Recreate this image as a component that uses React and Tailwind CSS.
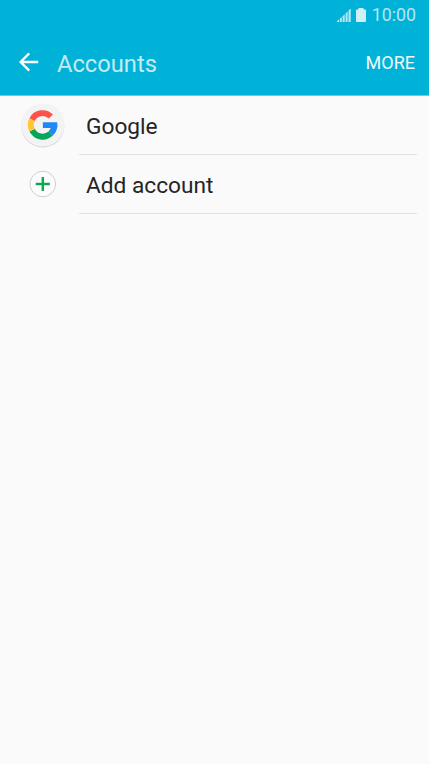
function SignalIcon() {
  return (
    <svg className="h-[14px] w-[14px]" viewBox="0 0 14 14" fill="#b9e8f2">
      <path d="M0 14v-1l2-1.5V14z" />
      <path d="M2.8 14v-3.2l2-1.7V14z" />
      <path d="M5.7 14V8.2l2-1.9V14z" />
      <path d="M8.6 14V5.4l2-2V14z" />
      <path d="M11.5 14V2.5L13.7.4V14z" />
    </svg>
  )
}

function BatteryIcon() {
  return (
    <svg className="h-[14px] w-[10px]" viewBox="0 0 10 14" fill="#d0eff6">
      <path d="M2.5 0h5v1.5H9.2q.8 0 .8.8V13.2q0 .8-.8.8H.8Q0 14 0 13.2V2.3q0-.8.8-.8h1.7z" />
    </svg>
  )
}

function BackIcon() {
  return (
    <svg className="h-5 w-5" viewBox="0 0 20 20" fill="none" stroke="#fff" strokeWidth="2.3">
      <path d="M19.2 10H2M10.2 1.4L1.6 10l8.6 8.6" />
    </svg>
  )
}

function GoogleIcon() {
  return (
    <svg className="h-[46px] w-[46px]" viewBox="0 0 46 46" fill="none" strokeWidth="5.9">
      <circle cx="22.8" cy="24" r="21.5" fill="#d2d2d2" />
      <circle cx="22.8" cy="23" r="21.6" fill="#f3f3f3" />
      <path stroke="#1e88f7" d="M30.8 31.4A11.8 11.8 0 0 0 34.4 22.9" />
      <path fill="#1e88f7" d="M22.9 20.2h14.3q.4 3.1-.2 5.8H22.9z" />
      <path stroke="#05a55b" d="M12.1 28.2A11.8 11.8 0 0 0 30.8 31.4" />
      <path stroke="#ffc62e" d="M12.1 17.6A11.8 11.8 0 0 0 12.1 28.2" />
      <path stroke="#fc5449" d="M30.9 14.5A11.8 11.8 0 0 0 12.1 17.6" />
    </svg>
  )
}

function AddIcon() {
  return (
    <svg className="h-7 w-7" viewBox="0 0 28 28" fill="none">
      <circle cx="13.8" cy="14" r="12.8" fill="#fcfcfc" stroke="#cfcfcf" />
      <path d="M13.8 7v14M6.8 14h14" stroke="#0aa84f" strokeWidth="2.4" />
    </svg>
  )
}

function AccountRow({ icon, label }) {
  return (
    <li className="flex h-[59px]">
      <div className="flex w-[79px] items-center justify-center pb-[2px] pl-[7px]">{icon}</div>
      <div className="mr-3 flex flex-1 items-center border-b border-[#e3e3e3] pl-[7px] pt-[3px]">
        <span className="text-[22.7px] leading-7 text-[#252525]">{label}</span>
      </div>
    </li>
  )
}

function App() {
  return (
    <div className="min-h-screen bg-[#fafafa] font-['Roboto',sans-serif]">
      <header className="h-24 border-b border-[#74c8dc] bg-[#00b2d8]">
        <div className="flex h-[30px] items-center justify-end pr-[13px]">
          <div className="flex gap-[5px] pb-px pr-[6px]">
            <SignalIcon />
            <BatteryIcon />
          </div>
          <span className="text-[17.8px] leading-[30px] text-[#b5e6f1]">10:00</span>
        </div>
        <div className="flex h-[65px] items-center pl-[19px] pr-[14px]">
          <button type="button" aria-label="Back" className="pb-px">
            <BackIcon />
          </button>
          <h1 className="ml-[18px] flex-1 pt-[2px] text-[23.7px] leading-7 text-[#c2ebf4]">Accounts</h1>
          <button type="button" className="text-[18px] leading-6 text-[#f0fafc]">
            MORE
          </button>
        </div>
      </header>
      <ul>
        <AccountRow icon={<GoogleIcon />} label="Google" />
        <AccountRow icon={<AddIcon />} label="Add account" />
      </ul>
    </div>
  )
}

export default App
